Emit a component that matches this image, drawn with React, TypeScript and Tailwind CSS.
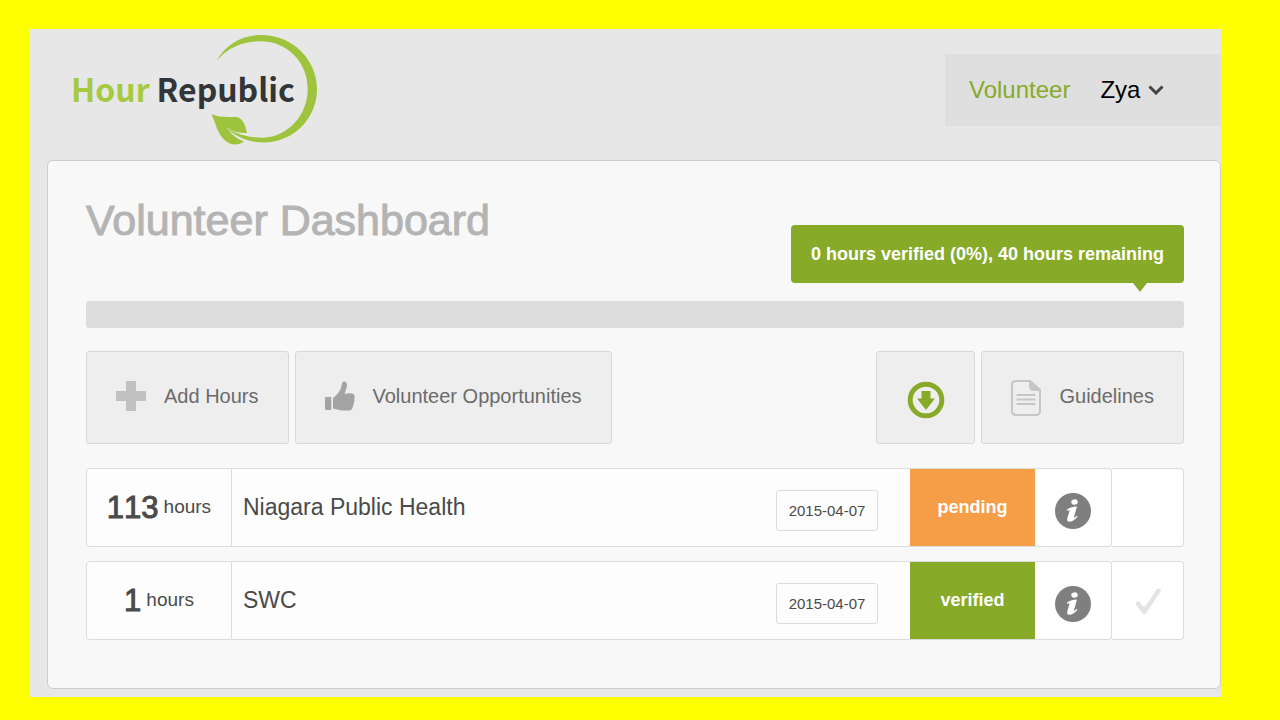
import React from "react";

interface Entry {
  id: number;
  hours: number;
  name: string;
  date: string;
  status: "pending" | "verified";
}

const entries: Entry[] = [
  { id: 1, hours: 113, name: "Niagara Public Health", date: "2015-04-07", status: "pending" },
  { id: 2, hours: 1, name: "SWC", date: "2015-04-07", status: "verified" },
];

const statusColors = {
  pending: "bg-[#f69d48]",
  verified: "bg-[#87aa29]",
};

function Logo() {
  return (
    <a
      href="#"
      className="relative ml-[42px] mt-[35px] flex h-[48px] items-center gap-[7px] font-['Noto_Sans_CJK_SC',sans-serif] text-[32px] leading-[48px] font-bold"
    >
      <span className="text-[#a5ca3f]">Hour</span>
      <span className="text-[#333638]">Republic</span>
      <svg
        className="absolute left-[139px] top-[-31px] h-[114px] w-[110px]"
        viewBox="0 0 110 114"
        fill="#9dc43c"
        aria-hidden="true"
      >
        <path d="M6.5 28 C16 11 32 2 51 2 C83 2 107 27 107 56 C107 86 83 109.500 53 109.500 C40 109.500 26 104 17 95.500 C29 102 40 104.700 53 104.700 C78 104 97.700 82 97.700 56 C97.700 29 77 8.300 51 8.300 C33 8.300 18 14 6.500 28 Z" />
        <path d="M1.500 81 C9 85 19 83.500 26 84 C33 85 35 91 37 100 C30 100.500 23 98.500 16.500 94.500 C21 101 27 106 34 108.500 C28 112.500 21 112.500 15 107.500 C7 100 6 91 1.500 81 Z" />
      </svg>
    </a>
  );
}

function PlusIcon() {
  return (
    <svg className="h-[30px] w-[30px]" viewBox="0 0 30 30" fill="#c1c1c1" aria-hidden="true">
      <path d="M10 0 H20 V10 H30 V20 H20 V30 H10 V20 H0 V10 H10 Z" />
    </svg>
  );
}

function ThumbIcon() {
  return (
    <svg className="h-[30px] w-[30px]" viewBox="0 0 30 30" fill="#a3a3a3" aria-hidden="true">
      <path d="M0 16 H6.300 V29 H1.500 Q0 29 0 27.500 Z" />
      <path d="M8 17 C12 14 15.500 10 16.500 5 C16.800 2 17.500 0.500 19 0.500 C21.500 0.500 22.300 3 21.800 6 C21.300 9 20 11 19.500 12.800 C23 12 27.500 12 29 13.500 C30.300 15 29.500 16.500 29.300 17.500 C29.800 19 29.300 20.500 28.800 21.500 C29 23 28.500 24.300 27.800 25.300 C27.800 28 26.500 29.500 23.500 29.500 C17 29.800 12.500 29 8 27.500 Z" />
    </svg>
  );
}

function DownloadIcon() {
  return (
    <svg className="h-[38px] w-[38px]" viewBox="0 0 38 38" aria-hidden="true">
      <circle cx="19" cy="19" r="15.800" fill="none" stroke="#87aa29" strokeWidth="5" />
      <path d="M14.500 10 H23.500 V17.500 H28 L19 29 L10 17.500 H14.500 Z" fill="#87aa29" />
    </svg>
  );
}

function DocumentIcon() {
  return (
    <svg className="mt-1 h-[36px] w-[30px]" viewBox="0 0 30 36" fill="none" stroke="#c6c6c6" strokeWidth="2" aria-hidden="true">
      <path d="M19 1 H5 Q1 1 1 5 V31 Q1 35 5 35 H25 Q29 35 29 31 V10 Z" />
      <path d="M19 1 V6 Q19 10 23 10 H29 Z" fill="#c6c6c6" />
      <path d="M5.500 15 H24.500 M5.500 19.500 H24.500 M5.500 24 H24.500" />
    </svg>
  );
}

function InfoIcon() {
  return (
    <svg className="h-[36px] w-[36px]" viewBox="0 0 36 36" aria-hidden="true">
      <circle cx="18" cy="18" r="18" fill="#7f7f7f" />
      <ellipse cx="19.500" cy="9" rx="3.300" ry="2.700" fill="#fff" transform="rotate(-15 19.500 9)" />
      <path
        d="M12 16.500 C15 14.500 18 13.500 22 13.500 L19 24 C18.800 25.300 20 24.500 21.800 22.800 L22.500 23.800 C19.500 27 17 28.800 14.500 28.800 C12 28.800 11.800 27 12.500 24.500 L14.500 18 C14.600 17 14 17.300 12.300 18 Z"
        fill="#fff"
      />
    </svg>
  );
}

function TickIcon() {
  return (
    <svg className="h-[28px] w-[28px]" viewBox="0 0 28 28" aria-hidden="true">
      <path
        d="M1.500 17 C1 15 4 13.200 5.500 15 L10.500 20.500 L22.500 2.500 C24 0.500 28 2 26.500 4.500 L12 26.500 Q10.500 28.300 8.800 26.500 Z"
        fill="#e4e4e4"
      />
    </svg>
  );
}

function EntryRow({ entry }: { entry: Entry }) {
  return (
    <tr className="h-[79px]">
      <td className="rounded-l border border-[#dcdcdc] bg-[#fdfdfd]">
        <div className="flex items-center justify-center gap-[5px]">
          <span className="text-[31px] leading-9 [font-kerning:none] [-webkit-text-stroke:1px_#4a4a4a]">{entry.hours}</span>
          <span className="text-[19px]">hours</span>
        </div>
      </td>
      <td className="border-y border-[#dcdcdc] bg-[#fdfdfd] pl-[11px] text-[23px]">{entry.name}</td>
      <td className="border-y border-[#dcdcdc] bg-[#fdfdfd] pt-1.5 text-[15px]">
        <time className="block w-[102px] rounded-[3px] border border-[#dcdcdc] text-center leading-[39px]">
          {entry.date}
        </time>
      </td>
      <td
        className={`border-y border-[#dcdcdc] text-center text-[18px] font-bold text-white ${statusColors[entry.status]}`}
      >
        {entry.status}
      </td>
      <td className="rounded-r border border-l-0 border-[#dcdcdc] bg-white pt-1.5">
        <button type="button" aria-label="Details" className="mx-auto block">
          <InfoIcon />
        </button>
      </td>
      <td className="rounded-r border border-l-0 border-[#dcdcdc] bg-white">
        {entry.status === "verified" && (
          <span className="flex justify-center">
            <TickIcon />
          </span>
        )}
      </td>
    </tr>
  );
}

export default function App() {
  return (
    <div className="min-h-screen bg-[#ffff00] pt-[29px] pr-[59px] pb-[23px] pl-[29px] font-['Liberation_Sans',Arial,sans-serif] text-[#4a4a4a]">
      <div className="bg-[#e7e7e7] pb-2">
        <header className="flex h-[131px] items-start justify-between">
          <Logo />
          <nav className="mt-[25px] flex h-[72px] w-[276px] items-center gap-[30px] bg-[#dfdfdf] pl-6 text-[24px]">
            <a href="#" className="text-[#87aa29]">
              Volunteer
            </a>
            <button type="button" className="flex items-center gap-2 text-black">
              Zya
              <svg className="h-[10px] w-[16px]" viewBox="0 0 16 10" fill="none" stroke="#444" strokeWidth="3" aria-hidden="true">
                <path d="M1.500 1.500 L8 8 L14.500 1.500" />
              </svg>
            </button>
          </nav>
        </header>

        <main className="ml-[18px] rounded-md border border-[#cdcdcd] bg-[#f8f8f8] pt-[35px] pr-9 pb-12 pl-[38px]">
          <div className="flex items-start justify-between">
            <h1 className="text-[43px] leading-[48px] text-[#b4b4b4] [-webkit-text-stroke:1px_#b4b4b4]">
              Volunteer Dashboard
            </h1>
            <div className="relative mt-[29px] rounded bg-[#87aa29] px-5 text-[18px] leading-[58px] font-bold text-white">
              0 hours verified (0%), 40 hours remaining
              <span className="absolute top-full right-[37px] border-x-[7px] border-t-[9px] border-x-transparent border-t-[#87aa29]"></span>
            </div>
          </div>

          <div
            role="progressbar"
            aria-label="Hours verified"
            aria-valuenow={0}
            className="mt-[18px] h-[27px] rounded-[3px] bg-[#dcdcdc]"
          ></div>

          <div className="mt-[23px] flex gap-[6px] text-[20px] text-[#6b6b6b]">
            <button type="button" className="flex h-[93px] items-center gap-[18px] rounded-[3px] border border-[#d8d8d8] bg-[#eeeeee] px-[29px] pb-1">
              <PlusIcon />
              Add Hours
            </button>
            <button type="button" className="flex h-[93px] items-center gap-[18px] rounded-[3px] border border-[#d8d8d8] bg-[#eeeeee] px-[29px] pb-1">
              <ThumbIcon />
              Volunteer Opportunities
            </button>
            <button
              type="button"
              aria-label="Download"
              className="ml-auto flex h-[93px] w-[99px] items-center justify-center rounded-[3px] border border-[#d8d8d8] bg-[#eeeeee] pt-1"
            >
              <DownloadIcon />
            </button>
            <button type="button" className="flex h-[93px] items-center gap-[18px] rounded-[3px] border border-[#d8d8d8] bg-[#eeeeee] px-[29px] pb-1">
              <DocumentIcon />
              Guidelines
            </button>
          </div>

          <table className="mt-[10px] -mb-[14px] w-full table-fixed border-separate border-spacing-x-0 border-spacing-y-[14px]">
            <colgroup>
              <col className="w-[146px]" />
              <col />
              <col className="w-[134px]" />
              <col className="w-[125px]" />
              <col className="w-[77px]" />
              <col className="w-[72px]" />
            </colgroup>
            <tbody>
              {entries.map((entry) => (
                <EntryRow key={entry.id} entry={entry} />
              ))}
            </tbody>
          </table>
        </main>
      </div>
    </div>
  );
}
